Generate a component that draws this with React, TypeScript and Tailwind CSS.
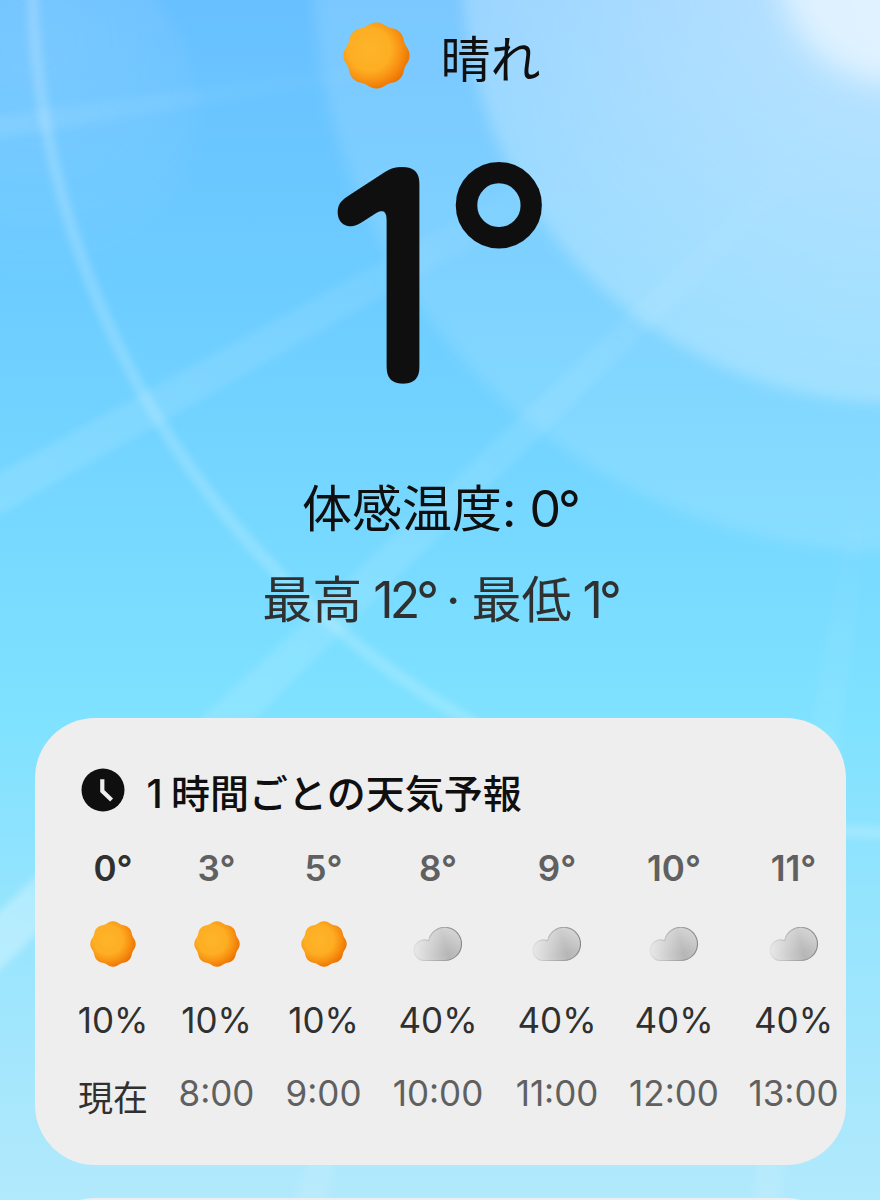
import clsx from "clsx";

type Condition = "sunny" | "cloudy";

type Hour = {
  temp: string;
  condition: Condition;
  rain: string;
  time: string;
  width: string;
};

const hours: Hour[] = [
  { temp: "0°", condition: "sunny", rain: "10%", time: "現在", width: "w-[69px]" },
  { temp: "3°", condition: "sunny", rain: "10%", time: "8:00", width: "w-[76px]" },
  { temp: "5°", condition: "sunny", rain: "10%", time: "9:00", width: "w-[76px]" },
  { temp: "8°", condition: "cloudy", rain: "40%", time: "10:00", width: "w-[91px]" },
  { temp: "9°", condition: "cloudy", rain: "40%", time: "11:00", width: "w-[85px]" },
  { temp: "10°", condition: "cloudy", rain: "40%", time: "12:00", width: "w-[87px]" },
  { temp: "11°", condition: "cloudy", rain: "40%", time: "13:00", width: "w-[90px]" },
];

// Eight soft lobes around a circle
function scallop() {
  const points: string[] = [];
  for (let i = 0; i < 360; i++) {
    const angle = (i / 360) * Math.PI * 2;
    const r = 31.5 + 1.15 * Math.cos(angle * 8) - 0.12 * Math.cos(angle * 16);
    points.push(
      `${(33 + r * Math.cos(angle)).toFixed(2)},${(33 + r * Math.sin(angle)).toFixed(2)}`
    );
  }
  return `M${points.join("L")}Z`;
}

const sunPath = scallop();

function SunIcon({ className }: { className?: string }) {
  return (
    <svg viewBox="0 0 66 66" className={className}>
      <defs>
        <radialGradient id="sun" gradientUnits="userSpaceOnUse" cx="26" cy="27" r="42">
          <stop offset="0" stopColor="#feb42a" />
          <stop offset="0.5" stopColor="#fdae22" />
          <stop offset="0.72" stopColor="#f99414" />
          <stop offset="1" stopColor="#ea6f00" />
        </radialGradient>
      </defs>
      <path d={sunPath} fill="url(#sun)" />
    </svg>
  );
}

function CloudIcon({ className }: { className?: string }) {
  const d =
    "M10.8 33.5A10.3 10.3 0 1 1 15.6 13.8A16.6 16.6 0 1 1 32 33.5Z";
  return (
    <svg viewBox="0 0 50 35" className={className}>
      <defs>
        <linearGradient id="cloud" x1="0" y1="0.6" x2="1" y2="0.4">
          <stop offset="0" stopColor="#e4e4e4" />
          <stop offset="0.35" stopColor="#cbcbcb" />
          <stop offset="0.65" stopColor="#b6b6b6" />
          <stop offset="1" stopColor="#c6c6c6" />
        </linearGradient>
        <linearGradient id="cloudShine" x1="0.4" y1="0" x2="0.6" y2="0.8">
          <stop offset="0" stopColor="#fff" stopOpacity="0.4" />
          <stop offset="1" stopColor="#fff" stopOpacity="0" />
        </linearGradient>
        <linearGradient id="cloudEdge" x1="0" y1="0" x2="1" y2="0">
          <stop offset="0" stopColor="#dedede" />
          <stop offset="0.4" stopColor="#b4b4b4" />
          <stop offset="1" stopColor="#868686" />
        </linearGradient>
      </defs>
      <path d={d} fill="url(#cloud)" />
      <path d={d} fill="url(#cloudShine)" stroke="url(#cloudEdge)" strokeWidth="1.1" />
    </svg>
  );
}

function ClockIcon() {
  return (
    <svg viewBox="0 0 44 44" className="size-11 shrink-0">
      <circle cx="22" cy="22" r="21.5" fill="#0f0f0f" />
      <path d="M21.3 11.2V23L30.6 32" fill="none" stroke="#eee" strokeWidth="4.2" />
    </svg>
  );
}

function Sky() {
  return (
    <svg
      viewBox="0 0 880 1200"
      className="absolute inset-0 h-full w-full"
      aria-hidden="true"
    >
      <defs>
        <linearGradient id="sky" x1="0" y1="0" x2="0" y2="1">
          <stop offset="0" stopColor="#68c0ff" />
          <stop offset="0.25" stopColor="#6dcdff" />
          <stop offset="0.6" stopColor="#7fe2ff" />
          <stop offset="0.7" stopColor="#8ee3fe" />
          <stop offset="1" stopColor="#b2e9fc" />
        </linearGradient>
        <radialGradient id="innerDisc" gradientUnits="userSpaceOnUse" cx="895" cy="-30" r="433">
          <stop offset="0" stopColor="#fff" stopOpacity="0.5" />
          <stop offset="0.4" stopColor="#fff" stopOpacity="0.4" />
          <stop offset="1" stopColor="#fff" stopOpacity="0.24" />
        </radialGradient>
        <radialGradient id="leftGlow" cx="0.55" cy="0.3" r="0.7">
          <stop offset="0" stopColor="#fff" stopOpacity="0.11" />
          <stop offset="1" stopColor="#fff" stopOpacity="0" />
        </radialGradient>
        <radialGradient id="ray" gradientUnits="userSpaceOnUse" cx="895" cy="-30" r="1300">
          <stop offset="0.15" stopColor="#fff" stopOpacity="0" />
          <stop offset="0.4" stopColor="#fff" stopOpacity="0.08" />
          <stop offset="0.8" stopColor="#fff" stopOpacity="0.12" />
          <stop offset="1" stopColor="#fff" stopOpacity="0.3" />
        </radialGradient>
        <radialGradient id="wideRay" gradientUnits="userSpaceOnUse" cx="895" cy="-30" r="1050">
          <stop offset="0.35" stopColor="#fff" stopOpacity="0" />
          <stop offset="0.6" stopColor="#fff" stopOpacity="0.08" />
          <stop offset="1" stopColor="#fff" stopOpacity="0.12" />
        </radialGradient>
        <radialGradient id="farRay" gradientUnits="userSpaceOnUse" cx="895" cy="-30" r="900">
          <stop offset="0.55" stopColor="#fff" stopOpacity="0" />
          <stop offset="1" stopColor="#fff" stopOpacity="0.09" />
        </radialGradient>
        <filter id="soft" x="-10%" y="-10%" width="120%" height="120%">
          <feGaussianBlur stdDeviation="3.5" />
        </filter>
        <filter id="disc" x="-20%" y="-20%" width="140%" height="140%">
          <feGaussianBlur stdDeviation="7" />
        </filter>
        <filter id="glow" x="-40%" y="-40%" width="180%" height="180%">
          <feGaussianBlur stdDeviation="15" />
        </filter>
      </defs>
      <rect width="880" height="1200" fill="url(#sky)" />
      <circle cx="20" cy="110" r="175" fill="url(#leftGlow)" filter="url(#disc)" />
      <g filter="url(#disc)">
        <circle cx="895" cy="-30" r="582" fill="#fff" fillOpacity="0.12" />
        <circle cx="895" cy="-30" r="433" fill="url(#innerDisc)" />
      </g>
      <circle cx="895" cy="-30" r="115" fill="#fff" fillOpacity="0.55" filter="url(#glow)" />
      <circle
        cx="895"
        cy="-30"
        r="863"
        fill="none"
        stroke="#fff"
        strokeOpacity="0.18"
        strokeWidth="12"
        filter="url(#soft)"
      />
      <g filter="url(#soft)">
        <path d="M400 60L-10 117V140L400 72Z" fill="url(#farRay)" />
        <path d="M700 85L-10 478V520L700 115Z" fill="url(#wideRay)" />
        <path d="M805 145L-10 920V980L820 160Z" fill="url(#ray)" />
      </g>
      <g filter="url(#soft)" fill="url(#farRay)">
        <path d="M862 440L812 720L752 1210H778L842 720L880 440Z" />
        <path d="M310 1150L293 1210H325L338 1150Z" />
      </g>
    </svg>
  );
}

function Temperature() {
  return (
    <svg
      viewBox="0 0 220 230"
      className="mt-[67px] h-[230px] w-[220px] shrink-0 overflow-visible"
      fill="#0f0f0f"
      stroke="#0f0f0f"
      strokeLinejoin="round"
    >
      <defs>
        {/* Blur, then sharpen the alpha again: rounds off the stroke ends */}
        <filter
          id="rounded"
          filterUnits="userSpaceOnUse"
          x="-20"
          y="-20"
          width="260"
          height="270"
          colorInterpolationFilters="sRGB"
        >
          <feGaussianBlur stdDeviation="5" />
          <feColorMatrix values="0 0 0 0 0.059  0 0 0 0 0.059  0 0 0 0 0.059  0 0 0 12 -5.2" />
        </filter>
      </defs>
      <g filter="url(#rounded)">
        <text
          className="font-[Inter] font-thin"
          transform="translate(-1.5 216.5) scale(1.15 1)"
          fontSize="267"
          strokeWidth="22"
        >
          1
        </text>
      </g>
      <text className="font-[Inter] font-thin" x="115" y="189" fontSize="237" strokeWidth="16">
        °
      </text>
    </svg>
  );
}

function HourColumn({ hour, current }: { hour: Hour; current: boolean }) {
  return (
    <div
      className={clsx(
        "flex shrink-0 flex-col items-center whitespace-nowrap text-[35px] leading-none",
        hour.width
      )}
    >
      <span
        className={clsx(
          "flex h-[44px] items-center font-semibold",
          current ? "text-[#303030]" : "text-[#606060]"
        )}
      >
        {hour.temp}
      </span>
      <div className="mt-[29px] flex h-[50px] items-center">
        {hour.condition === "sunny" ? (
          <SunIcon className="size-[46px]" />
        ) : (
          <CloudIcon className="h-[35px] w-[50px]" />
        )}
      </div>
      <span className="mt-[29px] flex h-[44px] items-center text-[#303030]">
        {hour.rain}
      </span>
      <span
        className={clsx(
          "flex h-[44px] items-center",
          current ? "mt-[34px] text-[#303030]" : "mt-[29px] text-[#606060]"
        )}
      >
        {hour.time}
      </span>
    </div>
  );
}

export default function App() {
  return (
    <main className="relative h-[1200px] w-[880px] overflow-hidden font-[Inter,'Noto_Sans_CJK_JP',sans-serif] text-[#0f0f0f]">
      <Sky />
      <div className="relative flex h-full flex-col items-center">
        <div className="mt-[22px] flex h-[67px] shrink-0 items-center gap-[31px] pl-[3px] text-[50px] leading-none">
          <SunIcon className="size-[67px]" />
          <span className="pt-2">晴れ</span>
        </div>
        <Temperature />
        <p className="mt-[87px] h-[72px] shrink-0 whitespace-pre text-[50px] leading-[72px] [word-spacing:-1px]">
          体感温度: <span className="tracking-[-3px]">0°</span>
        </p>
        <p className="mt-[19px] h-[72px] shrink-0 whitespace-pre text-[50px] leading-[72px] text-[#303030] [word-spacing:-3px]">
          最高 <span className="tracking-[-4px]">12°</span> · 最低 <span className="tracking-[-4px]">1°</span>
        </p>
        <section className="mt-[82px] h-[447px] w-[811px] shrink-0 overflow-hidden rounded-[60px] bg-[#eee] pl-[44px]">
          <div className="mt-[50px] flex h-[44px] items-center gap-[22px] pl-[2px]">
            <ClockIcon />
            <h2 className="whitespace-pre pt-[6px] text-[39px] font-medium leading-none [word-spacing:-2px]">
              1 時間ごとの天気予報
            </h2>
          </div>
          <div className="mt-[34px] flex gap-[31px]">
            {hours.map((hour, index) => (
              <HourColumn key={hour.time} hour={hour} current={index === 0} />
            ))}
          </div>
        </section>
        <section className="mt-[33px] h-[300px] w-[811px] shrink-0 rounded-[60px] bg-[#eee]" />
      </div>
    </main>
  );
}
